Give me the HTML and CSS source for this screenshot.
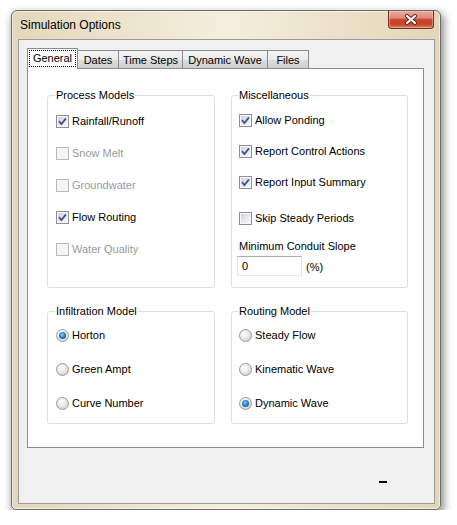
FILE: index.html
```html
<!DOCTYPE html>
<html lang="en">
<head>
<meta charset="utf-8">
<title>Simulation Options</title>
<link rel="stylesheet" href="styles.css">
</head>
<body>
<div class="window">
  <div class="titlebar">
    <span class="title">Simulation Options</span>
    <div class="close" aria-label="Close">
      <svg width="14" height="11" viewBox="0 0 14 11">
        <path d="M3 2 L11 9 M11 2 L3 9" stroke="#5a2a22" stroke-width="4" stroke-linecap="round" fill="none"/>
        <path d="M3 2 L11 9 M11 2 L3 9" stroke="#ffffff" stroke-width="2.2" stroke-linecap="round" fill="none"/>
      </svg>
    </div>
  </div>
  <div class="client">
    <div class="tabs">
      <div class="tab active t-general"><span class="focus">General</span></div>
      <div class="tab t-dates">Dates</div>
      <div class="tab t-time">Time Steps</div>
      <div class="tab t-dyn">Dynamic Wave</div>
      <div class="tab t-files">Files</div>
    </div>
    <div class="panel">
      <div class="groups">
        <fieldset class="group">
          <legend>Process Models</legend>
          <div class="rows">
            <div class="row"><span class="cb"><svg viewBox="0 0 11 11" width="11" height="11"><path d="M2 5.2 L4.4 8 L9 2.3" stroke="#3f559a" stroke-width="1.9" fill="none"/></svg></span><span>Rainfall/Runoff</span></div>
            <div class="row disabled"><span class="cb"></span><span>Snow Melt</span></div>
            <div class="row disabled"><span class="cb"></span><span>Groundwater</span></div>
            <div class="row"><span class="cb"><svg viewBox="0 0 11 11" width="11" height="11"><path d="M2 5.2 L4.4 8 L9 2.3" stroke="#3f559a" stroke-width="1.9" fill="none"/></svg></span><span>Flow Routing</span></div>
            <div class="row disabled"><span class="cb"></span><span>Water Quality</span></div>
          </div>
        </fieldset>
        <fieldset class="group misc">
          <legend>Miscellaneous</legend>
          <div class="rows">
            <div class="row r31"><span class="cb"><svg viewBox="0 0 11 11" width="11" height="11"><path d="M2 5.2 L4.4 8 L9 2.3" stroke="#3f559a" stroke-width="1.9" fill="none"/></svg></span><span>Allow Ponding</span></div>
            <div class="row r31"><span class="cb"><svg viewBox="0 0 11 11" width="11" height="11"><path d="M2 5.2 L4.4 8 L9 2.3" stroke="#3f559a" stroke-width="1.9" fill="none"/></svg></span><span>Report Control Actions</span></div>
            <div class="row r31"><span class="cb"><svg viewBox="0 0 11 11" width="11" height="11"><path d="M2 5.2 L4.4 8 L9 2.3" stroke="#3f559a" stroke-width="1.9" fill="none"/></svg></span><span>Report Input Summary</span></div>
            <div class="row r40"><span class="cb"></span><span>Skip Steady Periods</span></div>
            <div class="label">Minimum Conduit Slope</div>
            <div class="slope"><span class="input">0</span><span class="unit">(%)</span></div>
          </div>
        </fieldset>
        <fieldset class="group">
          <legend>Infiltration Model</legend>
          <div class="rows radios">
            <div class="row r34"><span class="rb on"></span><span>Horton</span></div>
            <div class="row r34"><span class="rb"></span><span>Green Ampt</span></div>
            <div class="row r34"><span class="rb"></span><span>Curve Number</span></div>
          </div>
        </fieldset>
        <fieldset class="group misc">
          <legend>Routing Model</legend>
          <div class="rows radios">
            <div class="row r34"><span class="rb"></span><span>Steady Flow</span></div>
            <div class="row r34"><span class="rb"></span><span>Kinematic Wave</span></div>
            <div class="row r34"><span class="rb on"></span><span>Dynamic Wave</span></div>
          </div>
        </fieldset>
      </div>
    </div>
    <div class="footer"><span class="dash"></span></div>
  </div>
</div>
</body>
</html>
```
FILE: styles.css
```css
html, body {
  margin: 0;
  padding: 0;
  background: #ffffff;
}
body {
  font-family: "Liberation Sans", Arial, sans-serif;
  font-size: 11px;
  color: #000;
}
.window {
  box-sizing: border-box;
  margin: 10px 0 0 11px;
  width: 430px;
  height: 500px;
  border: 1px solid #6a6a6a;
  border-radius: 6px 6px 5px 5px;
  background: linear-gradient(to right, #e3d7ba 0%, #ede3cc 25%, #f5eede 50%, #ece2ca 75%, #e2d6b9 100%);
  box-shadow: inset 0 0 0 1px rgba(255,255,255,0.55), 2px 4px 9px 1px rgba(0,0,0,0.45);
}
.titlebar {
  height: 28px;
  display: flex;
  justify-content: space-between;
  align-items: flex-start;
}
.title {
  font-size: 12px;
  line-height: 14px;
  margin: 7px 0 0 8px;
}
.close {
  box-sizing: border-box;
  width: 46px;
  height: 18px;
  margin-right: 6px;
  border: 1px solid #6e2e22;
  border-top: none;
  border-radius: 0 0 4px 4px;
  background: linear-gradient(#e9ab9c 0%, #e0897a 40%, #c9442b 52%, #c3432a 78%, #e1805f 100%);
  box-shadow: inset 0 0 0 1px rgba(255,210,190,0.45);
  display: flex;
  align-items: center;
  justify-content: center;
}
.close svg { display: block; }
.client {
  box-sizing: border-box;
  margin: 0 5px 0 6px;
  height: 465px;
  border: 1px solid #9b9b9b;
  background: #f0f0f0;
}
.tabs {
  display: flex;
  align-items: flex-end;
  height: 20px;
  margin-top: 8px;
  padding-left: 8px;
}
.tab {
  box-sizing: border-box;
  height: 18px;
  border: 1px solid #898c95;
  border-bottom: none;
  border-left: none;
  background: linear-gradient(#f3f3f3 0%, #ebebeb 50%, #dddddd 51%, #cfcfcf 100%);
  display: flex;
  align-items: center;
  justify-content: center;
  line-height: 13px;
  padding-top: 1px;
}
.tab.active {
  height: 21px;
  margin-bottom: -1px;
  border-left: 1px solid #898c95;
  background: #ffffff;
  position: relative;
  z-index: 1;
  padding: 1px 1px 2px 1px;
}
.focus {
  box-sizing: border-box;
  width: 100%;
  height: 100%;
  border: 1px dotted #000;
  display: flex;
  align-items: center;
  justify-content: center;
}
.t-general { width: 51px; }
.t-dates { width: 41px; }
.t-time { width: 64px; }
.t-dyn { width: 85px; }
.t-files { width: 41px; }
.panel {
  box-sizing: border-box;
  margin-left: 8px;
  width: 397px;
  height: 380px;
  border: 1px solid #898c95;
  background: #ffffff;
}
.groups {
  display: grid;
  grid-template-columns: 168px 177px;
  grid-template-rows: 199px 119px;
  column-gap: 16px;
  row-gap: 17px;
  padding: 20px 0 0 19px;
}
.group {
  box-sizing: border-box;
  margin: 0;
  min-width: 0;
  padding: 0 8px;
  border: 1px solid #d5dfe5;
  border-radius: 3px;
}
.group.misc { padding-left: 7px; }
legend {
  padding: 0 1px;
  margin-left: -1px;
  line-height: 13px;
}
.rows { padding-top: 3px; }
.rows.radios { padding-top: 0; }
.row {
  height: 32px;
  display: flex;
  align-items: center;
  gap: 3px;
  line-height: 13px;
}
.row.r31 { height: 31px; }
.row.r40 { height: 40px; }
.row.r34 { height: 34px; }
.row.disabled { color: #9a9a9a; }
.cb {
  box-sizing: border-box;
  width: 13px;
  height: 13px;
  flex: none;
  border: 1px solid #8e8f8f;
  background: linear-gradient(135deg, #c9cdd3 0%, #e6e8eb 50%, #f9f9fa 100%);
  box-shadow: inset 0 0 0 1px #f7f7f7;
}
.cb svg { display: block; }
.disabled .cb {
  border-color: #b9b9b9;
  background: #f4f4f4;
  box-shadow: none;
}
.rb {
  box-sizing: border-box;
  width: 13px;
  height: 13px;
  flex: none;
  border-radius: 50%;
  border: 1px solid #9a9a9a;
  background: radial-gradient(circle at 40% 35%, #ffffff 0%, #e9e9e9 45%, #c4c4c4 100%);
  display: flex;
  align-items: center;
  justify-content: center;
}
.rb.on::after {
  content: "";
  width: 7px;
  height: 7px;
  border-radius: 50%;
  background: radial-gradient(circle at 45% 40%, #8fd3f5 0%, #2b82c2 45%, #0c3f78 100%);
}
.label {
  line-height: 13px;
  margin-top: 2px;
}
.slope {
  display: flex;
  align-items: center;
  margin-top: 3px;
  margin-left: -2px;
}
.input {
  box-sizing: border-box;
  width: 65px;
  height: 20px;
  border: 1px solid;
  border-color: #abadb3 #dbdfe6 #e3e9ef #e2e3ea;
  padding-left: 4px;
  display: flex;
  align-items: center;
  background: #fff;
}
.unit {
  margin-left: 4px;
  padding-top: 2px;
}
.footer {
  display: flex;
  justify-content: flex-end;
  padding-top: 33px;
  padding-right: 47px;
}
.dash {
  width: 8px;
  height: 2px;
  background: #000;
}
```
